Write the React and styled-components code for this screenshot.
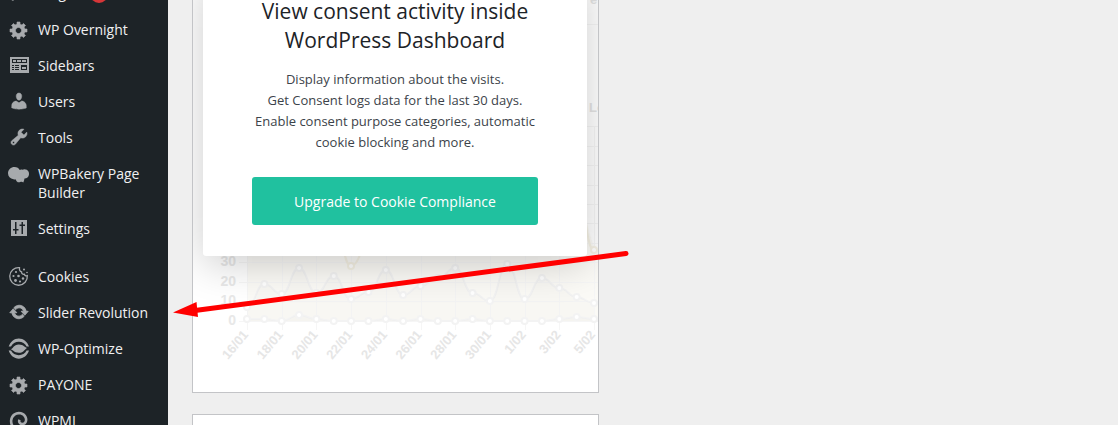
import React from "react";
import styled, { createGlobalStyle } from "styled-components";

const GlobalStyle = createGlobalStyle`
  * {
    box-sizing: border-box;
  }
  body {
    margin: 0;
    background: #efefef;
    font-family: "Open Sans", "Noto Sans", sans-serif;
  }
`;

const Page = styled.div`
  position: relative;
  display: flex;
  height: 100vh;
  overflow: hidden;
`;

const Sidebar = styled.nav`
  flex: 0 0 168px;
  background: #1d2327;
`;

const MenuList = styled.ul`
  list-style: none;
  margin: -25px 0 0;
  padding: 0;
`;

const MenuItem = styled.li`
  margin-top: ${(props) => (props.$separated ? "12px" : "0")};
`;

const MenuLink = styled.a`
  display: flex;
  align-items: flex-start;
  gap: 9px;
  padding: 8px 9px 9px;
  color: #f0f0f1;
  font-size: 14px;
  line-height: 19px;
  text-decoration: none;
`;

const Icon = styled.svg`
  flex: none;
  width: 20px;
  height: 20px;
  margin-bottom: -1px;
  fill: #a7aaad;
`;

const Badge = styled.span`
  flex: none;
  width: 18px;
  height: 18px;
  margin-top: 2px;
  margin-left: -4px;
  border-radius: 9px;
  background: #d63638;
`;

const Main = styled.main`
  flex: 1;
  min-width: 0;
  display: flex;
  flex-direction: column;
  gap: 21px;
  padding: 0 24px;
`;

const Widget = styled.section`
  flex: none;
  display: grid;
  width: 100%;
  max-width: 407px;
  min-height: 120px;
  margin-top: ${(props) => (props.$scrolled ? "-33px" : "0")};
  overflow: hidden;
  background: #fff;
  border: 1px solid #c3c4c7;
`;

const Chart = styled.svg`
  grid-area: 1 / 1;
  display: block;
  width: 405px;
  height: 424px;
  font-family: "Liberation Sans", Arial, sans-serif;
  font-weight: bold;
`;

const Notice = styled.div`
  grid-area: 1 / 1;
  align-self: start;
  z-index: 1;
  margin: 5px 11px 0 10px;
  padding: 24px 49px 31px;
  background: #fff;
  border-radius: 3px;
  box-shadow: 0 8px 40px rgba(0, 0, 0, 0.2);
  text-align: center;
  white-space: nowrap;
`;

const Title = styled.h2`
  margin: 0 -20px;
  color: #1d2327;
  font-size: 21px;
  font-weight: 400;
  line-height: 29px;
`;

const Text = styled.p`
  margin: 14px -20px 24px;
  color: #3c434a;
  font-size: 13px;
  line-height: 21px;
`;

const UpgradeButton = styled.button`
  display: block;
  width: 100%;
  height: 48px;
  padding: 0;
  border: none;
  border-radius: 3px;
  background: #20c19f;
  color: #fff;
  font-family: inherit;
  font-size: 14px;
  cursor: pointer;
`;

const Arrow = styled.svg`
  position: absolute;
  left: 168px;
  top: 244px;
  z-index: 2;
  width: 466px;
  height: 80px;
  pointer-events: none;
`;

const gear = (
  <path
    stroke="#a7aaad"
    strokeWidth=".6"
    d="M18 12h-2.18c-.17.7-.44 1.35-.81 1.93l1.54 1.54-2.1 2.1-1.54-1.54c-.58.36-1.23.63-1.91.79V19H8v-2.18c-.68-.16-1.33-.43-1.91-.79l-1.54 1.54-2.12-2.12 1.54-1.54c-.36-.58-.63-1.23-.79-1.91H1V9.03h2.17c.16-.7.44-1.35.8-1.94L2.43 5.55l2.1-2.1 1.54 1.54c.58-.37 1.24-.64 1.93-.81V2h3v2.18c.68.16 1.33.43 1.91.79l1.54-1.54 2.12 2.12-1.54 1.54c.36.59.64 1.24.8 1.94H18V12zm-8.5 1.5c1.66 0 3-1.34 3-3s-1.34-3-3-3-3 1.34-3 3 1.34 3 3 3z"
  />
);

const icons = {
  plug: (
    <path d="M13.11 4.36L9.87 7.6 8 5.73l3.24-3.24c.35-.34 1.05-.2 1.56.32.52.51.66 1.21.31 1.55zm-8 1.77l.91-1.12 9.01 9.01-1.19.84c-.71.71-2.63 1.16-3.82 1.16H6.14L4.9 17.26c-.59.59-1.54.59-2.12 0-.59-.58-.59-1.53 0-2.12l1.24-1.24v-3.88c0-1.13.4-3.19 1.09-3.89zm7.26 3.97l3.24-3.24c.34-.35 1.04-.21 1.55.31.52.51.66 1.21.31 1.55l-3.24 3.25z" />
  ),
  gear,
  sidebars: (
    <>
      <path
        fillRule="evenodd"
        d="M1 1h19v16H1zM3 3v4h15V3zM3 9v1h2V9zM6 9v1h4V9zM3 11v1h2v-1zM6 11v1h4v-1zM3 13v1h2v-1zM6 13v1h4v-1zM12 9v5h6V9z"
      />
      <path d="M4 4h3v2H4zM8 4h4v2H8zM13 4h4v2h-4zM13 11h4v2h-4z" />
    </>
  ),
  users: (
    <path
      stroke="#a7aaad"
      strokeWidth=".5"
      d="M10 9.25c-2.27 0-2.73-3.44-2.73-3.44C7 4.02 7.82 2 9.97 2c2.16 0 2.98 2.02 2.71 3.81 0 0-.41 3.44-2.68 3.44zm0 2.57L12.72 10c2.39 0 4.52 2.33 4.52 4.53v2.49s-3.65 1.13-7.24 1.13c-3.65 0-7.24-1.13-7.24-1.13v-2.49c0-2.25 1.94-4.48 4.47-4.48z"
      transform="translate(0 -1)"
    />
  ),
  tools: (
    <path
      stroke="#a7aaad"
      strokeWidth=".5"
      d="M16.68 9.77c-1.34 1.34-3.3 1.67-4.95.99l-5.41 6.52c-.99.99-2.59.99-3.58 0s-.99-2.59 0-3.57l6.52-5.42c-.68-1.65-.35-3.61.99-4.95 1.28-1.28 3.12-1.62 4.72-1.06l-2.89 2.89 2.82 2.82 2.86-2.87c.53 1.58.18 3.39-1.08 4.65zM3.81 16.21c.4.39 1.04.39 1.43 0 .4-.4.4-1.04 0-1.43-.39-.4-1.03-.4-1.43 0-.39.39-.39 1.03 0 1.43z"
      transform="translate(0 -1)"
    />
  ),
  bakery: (
    <path d="M5.500 3C8 3 9.800 4.200 10.700 6c.8-.6 1.800-.7 2.600-.2 1.200-.8 3.200-.9 4.500 0 1.700 1.100 2.400 2.700 2.200 4.600-.3 2.500-2.100 4.100-4.500 4.200-.2 1.500-.6 2.600-1.200 3.800-1-.7-2-.8-3.100-.3-1.300.4-2.600.1-3.300-.7-.7-.4-.9-1.100-.9-1.900-1 .1-1.800 0-2.500-.3C1.200 14.600-1 12.500-1 9.300-1 5.600 2 3 5.500 3z" />
  ),
  settings: (
    <path
      fillRule="evenodd"
      d="M2 1h16v16H2zM6 3v7H4v1.500h2V15h1.500v-3.500h2V10h-2V3zM12.500 3v2.500h-2V7h2v8H14V7h2V5.500h-2V3z"
    />
  ),
  cookie: (
    <>
      <path
        d="M10.500.7A8.800 8.800 0 1 0 18.300 8.600c-1.400.5-2.700 0-3-1.400-1.500.4-3-.7-2.700-2.300-1.500-.3-2.400-1.900-2.100-4.200z"
        fill="none"
        stroke="#a7aaad"
        strokeWidth="1.300"
      />
      <circle cx="7" cy="5" r="1.100" />
      <circle cx="4.500" cy="9" r="1.100" />
      <circle cx="9.500" cy="9" r="1.300" />
      <circle cx="6.500" cy="13.500" r="1.400" />
      <circle cx="11" cy="14.500" r="1.100" />
      <circle cx="14" cy="11.500" r="1.200" />
      <circle cx="15" cy="2.500" r="1" />
      <circle cx="18" cy="5.500" r=".8" />
    </>
  ),
  update: (
    <path
      stroke="#a7aaad"
      strokeWidth=".9"
      d="M10.200 3.280c3.530 0 6.430 2.610 6.920 6h2.080l-3.500 4-3.500-4h2.320c-.45-1.970-2.210-3.450-4.320-3.450-1.450 0-2.730.71-3.540 1.780L4.950 5.660C6.230 4.200 8.110 3.280 10.200 3.280zm-.4 13.440c-3.520 0-6.430-2.610-6.920-6H.8l3.500-4c1.170 1.330 2.330 2.670 3.500 4H5.480c.45 1.970 2.210 3.450 4.320 3.450 1.450 0 2.730-.71 3.540-1.780l1.710 1.950c-1.280 1.460-3.150 2.380-5.250 2.380z"
      transform="translate(0 -1)"
    />
  ),
  optimize: (
    <>
      <path d="M-.3 7.500C1.200 2.700 5.200-.6 9.800-.6s8.700 3.300 10.200 8.100h-2.400C16.200 4.600 13.200 2.800 9.800 2.800S3.500 4.600 2 7.500z" />
      <path d="M-.3 11.600c1.500 4.900 5.500 8.100 10.100 8.100s8.700-3.200 10.200-8.100h-2.400c-1.400 2.900-4.400 4.700-7.800 4.700s-6.300-1.800-7.800-4.700z" />
      <path d="M1.600 10.300c2.300-.3 3-4.900 8.200-4.900s5.900 3.200 8.500 3.500c-2.300.4-3.200 4.900-8.500 4.900-5.100 0-5.800-3.300-8.200-3.500z" />
    </>
  ),
  swirl: (
    <path
      d="M4.500 16.500C.8 12 1.700 6.300 5.300 3.600c3.800-2.700 9.700-1.600 11.400 2.900 1.300 3.500-.6 6.500-3.400 6.500-2.600 0-3.700-2.200-2.800-4.200"
      fill="none"
      stroke="#a7aaad"
      strokeWidth="2.600"
    />
  ),
};

const menu = [
  { label: "Plugins", icon: "plug", badge: true },
  { label: "WP Overnight", icon: "gear" },
  { label: "Sidebars", icon: "sidebars" },
  { label: "Users", icon: "users" },
  { label: "Tools", icon: "tools" },
  { label: "WPBakery Page Builder", icon: "bakery" },
  { label: "Settings", icon: "settings" },
  { label: "Cookies", icon: "cookie", separated: true },
  { label: "Slider Revolution", icon: "update" },
  { label: "WP-Optimize", icon: "optimize" },
  { label: "PAYONE", icon: "gear" },
  { label: "WPML", icon: "swirl" },
];

const days = ["16/01", "18/01", "20/01", "22/01", "24/01", "26/01", "28/01", "30/01", "1/02", "3/02", "5/02"];
const visits = [307, 284, 294, 268, 293, 276, 299, 292, 270, 295, 286, 278, 268, 293, 301, 264, 299, 278, 288, 297, 303];
const denied = [319, 319, 321, 315, 319, 321, 321, 321, 319, 321, 319, 321, 321, 319, 321, 321, 321, 321, 319, 317, 319];

const xAt = (i) => 247 + i * 17.35;

// smooth line with horizontal tangents at every point
const curve = (values) =>
  values
    .map((y, i) => {
      if (i === 0) return `M${xAt(0)} ${y}`;
      const mid = (xAt(i - 1) + xAt(i)) / 2;
      return `C${mid} ${values[i - 1]} ${mid} ${y} ${xAt(i)} ${y}`;
    })
    .join("");

function Series({ values }) {
  return (
    <g stroke="#f3f3f3" strokeWidth="2">
      <path d={curve(values)} fill="none" />
      <path d={`${curve(values)}V321H247Z`} fill="#000" fillOpacity="0.01" stroke="none" />
      {values.map((y, i) => (
        <circle key={i} cx={xAt(i)} cy={y} r="3" fill="#fff" />
      ))}
    </g>
  );
}

function ConsentChart() {
  return (
    <Chart viewBox="193 -32 405 424" aria-hidden="true">
      <path d="M247 126H598V321H247Z" fill="#fbfaf6" />
      <path d="M587 126h11v124q-5 0-11-28z" fill="#fff" />
      <g stroke="#f6f6f6">
        <path d="M587 24.500h11" />
        {[126, 146, 165, 185, 204, 223, 243, 262, 282, 301, 321].map((y) => (
          <path key={y} d={`M239 ${y}.5H598`} />
        ))}
        {days.map((day, i) => (
          <path key={day} d={`M${Math.round(xAt(i * 2))}.5 126V330`} />
        ))}
      </g>
      <g fill="none" stroke="#f5f1e4" strokeWidth="2">
        <path d="M334 220C343 230 343 266 351 266S363 245 368 225" />
        <path d="M577 190C586 195 585 250 594 250" />
        <circle cx="351" cy="266" r="3" fill="#fff" />
        <circle cx="594" cy="250" r="3" fill="#fff" />
      </g>
      <Series values={visits} />
      <Series values={denied} />
      <g fill="#e8e8e8" fontSize="14" textAnchor="end">
        <text x="236" y="266">30</text>
        <text x="236" y="286">20</text>
        <text x="236" y="305">10</text>
        <text x="236" y="325">0</text>
      </g>
      <g fill="#e6e6e6" fontSize="13" textAnchor="end">
        {days.map((day, i) => (
          <text key={day} transform={`translate(${xAt(i * 2) + 2} 335) rotate(-50)`}>
            {day}
          </text>
        ))}
      </g>
      <g fill="#e4e4e4" fontSize="13">
        <text x="589" y="112">Lo</text>
        <text x="590" y="4">e</text>
      </g>
    </Chart>
  );
}

function App() {
  return (
    <Page>
      <GlobalStyle />
      <Sidebar>
        <MenuList>
          {menu.map((item) => (
            <MenuItem key={item.label} $separated={item.separated}>
              <MenuLink href="#">
                <Icon viewBox="0 0 20 20" overflow="visible">
                  {icons[item.icon]}
                </Icon>
                <span>{item.label}</span>
                {item.badge && <Badge />}
              </MenuLink>
            </MenuItem>
          ))}
        </MenuList>
      </Sidebar>
      <Main>
        <Widget $scrolled>
          <ConsentChart />
          <Notice>
            <Title>
              View consent activity inside
              <br />
              WordPress Dashboard
            </Title>
            <Text>
              Display information about the visits.
              <br />
              Get Consent logs data for the last 30 days.
              <br />
              Enable consent purpose categories, automatic
              <br />
              cookie blocking and more.
            </Text>
            <UpgradeButton type="button">Upgrade to Cookie Compliance</UpgradeButton>
          </Notice>
        </Widget>
        <Widget />
      </Main>
      <Arrow viewBox="168 244 466 80" aria-hidden="true">
        <path d="M195 310.500L626 253.500" stroke="#f00" strokeWidth="5" strokeLinecap="round" />
        <path d="M173 312.500L196.500 302L198 317z" fill="#f00" />
      </Arrow>
    </Page>
  );
}

export default App;
